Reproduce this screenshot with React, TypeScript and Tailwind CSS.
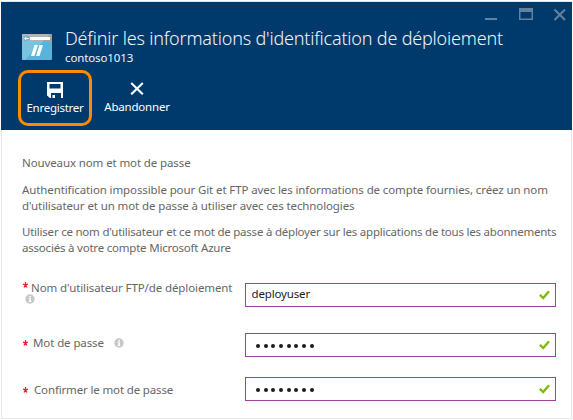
import React from 'react';

function InfoIcon({ className = '' }: { className?: string }) {
  return (
    <svg className={`shrink-0 ${className}`} width="10" height="10" viewBox="0 0 10 10" aria-label="Info">
      <circle cx="5" cy="5" r="4.7" fill="#c8c8c8" />
      <path d="M4.2 2h1.7v1.4H4.2zM3.6 4.2h2.3v3h.7v.8H3.5v-.8h.8V5h-.7z" fill="#fff" />
    </svg>
  );
}

function CheckIcon() {
  return (
    <svg className="mr-[5px] shrink-0" width="11" height="10" viewBox="0 0 11 10" aria-label="Valide">
      <path d="M.9 4.8 4.2 8 10 1.2" fill="none" stroke="#7fba00" strokeWidth="2.3" />
    </svg>
  );
}

function Star({ className = '' }: { className?: string }) {
  return (
    <svg className={`shrink-0 ${className}`} width="5" height="6" viewBox="0 0 5 6" aria-label="Obligatoire">
      <path d="M2.5 0v3M0 2.1l2.5.9L5 2.1M1 5.5 2.5 3 4 5.5" fill="none" stroke="#ee1c2e" strokeWidth="1.3" />
    </svg>
  );
}

function Dots() {
  return (
    <div className="ml-[10px] mt-[2px] flex gap-[3.7px]">
      {Array.from({ length: 8 }, (_, i) => (
        <span key={i} className="size-[4px] rounded-full bg-[#1b1b1b]" />
      ))}
    </div>
  );
}

function Field({ children }: { children: React.ReactNode }) {
  return (
    <div className="flex h-6 w-[311px] shrink-0 items-center justify-between border border-[#96479a] bg-white">
      {children}
      <CheckIcon />
    </div>
  );
}

export default function App() {
  return (
    <div className="h-[420px] w-[573px] overflow-hidden bg-white px-px pt-px font-['Noto_Sans','Open_Sans',sans-serif] text-[11.5px]">
      <div className="flex h-[418px] w-[571px] flex-col border border-[#e6e6e6]">
        <header className="-mx-px h-32 shrink-0 bg-[#003a6c] text-white">
          <div className="flex h-[22px] justify-end pr-[5px] pt-[6px]">
            <svg width="82" height="13" viewBox="0 0 82 13" fill="none" stroke="#64829d" aria-label="Fenêtre">
              <path d="M0 11h12" strokeWidth="2" />
              <path d="M34.75 1v10.25h12.5V1" strokeWidth="1.5" />
              <path d="M34 2h14" strokeWidth="4" />
              <path d="M69.5 1.5 80 12M80 1.5 69.5 12" strokeWidth="2" />
            </svg>
          </div>
          <div className="flex h-[46px] pl-[21px]">
            <svg className="mt-[10px] shrink-0" width="30" height="26" viewBox="0 0 30 26">
              <rect width="30" height="26" rx="1" fill="#59b4d9" />
              <path d="M1 0h28a1 1 0 0 1 1 1v7H0V1a1 1 0 0 1 1-1" fill="#a0a1a2" />
              <path d="M0 1a1 1 0 0 1 1-1h27L3 26H1a1 1 0 0 1-1-1z" fill="#fff" opacity=".2" />
              <rect x="8" y="3" width="20" height="3" fill="#fff" />
              <circle cx="4.5" cy="4.5" r="2.9" fill="#59b4d9" />
              <path d="M6.8 4.5H2.8M4.6 2.7 2.8 4.5l1.800 1.8" stroke="#fff" fill="none" />
              <path d="M12.5 11H16l-3.500 11H9zM17.5 11H21l-3.500 11H14z" fill="#fff" />
            </svg>
            <div className="ml-[13px] whitespace-nowrap">
              <h1 className="mt-[2px] h-6 text-[18px] leading-6 font-light tracking-[-0.19px] text-[#f2f5f8]">
                Définir les informations d'identification de déploiement
              </h1>
              <p className="leading-4 tracking-[-0.12px] text-[#f2f5f8]">contoso1013</p>
            </div>
          </div>
          <div className="flex h-[58px] pl-[17px] whitespace-nowrap">
            <button className="flex h-[56px] w-[74px] flex-col items-center rounded-[10px] border-[3px] border-[#ff8c00]">
              <svg className="mt-[9px] shrink-0" width="16" height="16" viewBox="0 0 16 16">
                <path
                  d="M0 0h16v16h-2v-5H4v5H3l-3-2.500zM2.500 2v4.500h11V2zM5.500 13h2.500v3H5.500z"
                  fill="#fff"
                  fillRule="evenodd"
                />
              </svg>
              <span className="mt-[2px] leading-4 tracking-[-0.26px]">Enregistrer</span>
            </button>
            <button className="ml-[12px] flex w-[66px] flex-col items-center">
              <svg className="mt-[12px] shrink-0" width="14" height="13" viewBox="0 0 14 13">
                <path d="M1.2 1 12.800 12.300M12.800 1 1.200 12.300" stroke="#fff" strokeWidth="2.1" />
              </svg>
              <span className="mt-[4px] leading-4 tracking-[-0.2px]">Abandonner</span>
            </button>
          </div>
        </header>
        <main className="pl-[20px] pt-[25px] whitespace-nowrap text-[#666]">
          <p className="leading-4 tracking-[-0.11px]">Nouveaux nom et mot de passe</p>
          <p className="mt-[11px] leading-4 tracking-[-0.11px]">
            Authentification impossible pour Git et FTP avec les informations de compte fournies, créez un nom
          </p>
          <p className="leading-4 tracking-[-0.11px]">d'utilisateur et un mot de passe à utiliser avec ces technologies</p>
          <p className="mt-[10px] leading-4 tracking-[-0.225px]">
            Utiliser ce nom d'utilisateur et ce mot de passe à déployer sur les applications de tous les abonnements
          </p>
          <p className="leading-4 tracking-[-0.21px]">associés à votre compte Microsoft Azure</p>
          <div className="mt-[24px] flex h-[50px]">
            <div className="w-[223px] shrink-0">
              <div className="flex h-4">
                <Star className="mt-[2px] ml-px" />
                <span className="ml-[3px] leading-4 tracking-[-0.1px]">Nom d'utilisateur FTP/de déploiement</span>
              </div>
              <InfoIcon className="-mt-[2px] ml-[3px]" />
            </div>
            <div className="pt-[3px]">
              <Field>
                <span className="ml-[5.5px] pb-[2px] leading-4 tracking-[-0.15px] text-[#1b1b1b]">deployuser</span>
              </Field>
            </div>
          </div>
          <div className="flex h-11 items-start">
            <div className="flex h-[26px] w-[223px] shrink-0 items-center">
              <Star className="-mt-px ml-px" />
              <span className="ml-[5px] leading-4 tracking-[-0.1px]">Mot de passe</span>
              <InfoIcon className="ml-[10px]" />
            </div>
            <div className="pt-[3px]">
              <Field><Dots /></Field>
            </div>
          </div>
          <div className="flex items-start">
            <div className="flex h-[32px] w-[223px] shrink-0 items-center">
              <Star className="ml-px" />
              <span className="ml-[6px] leading-4 tracking-[-0.15px]">Confirmer le mot de passe</span>
            </div>
            <div className="pt-[3px]">
              <Field><Dots /></Field>
            </div>
          </div>
        </main>
      </div>
    </div>
  );
}
